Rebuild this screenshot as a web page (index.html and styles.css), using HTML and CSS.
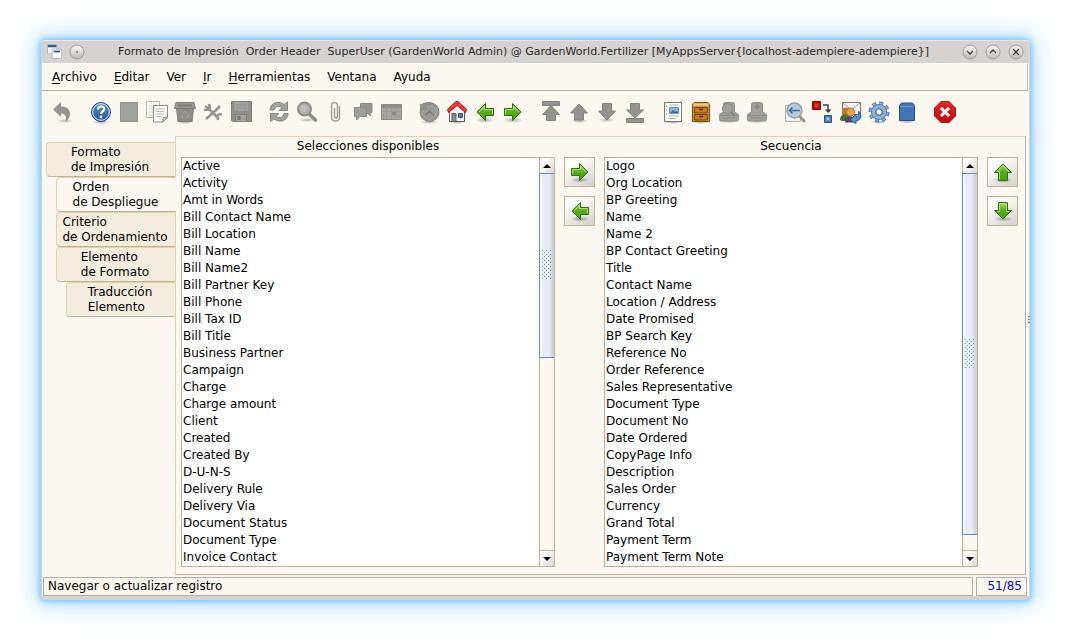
FILE: index.html
```html
<!DOCTYPE html>
<html lang="es">
<head>
<meta charset="utf-8">
<title>Formato de Impresión</title>
<link rel="stylesheet" href="styles.css">
</head>
<body>
<svg class="defs" aria-hidden="true">
  <defs>
    <linearGradient id="green" x1="0" y1="0" x2="0" y2="1"><stop offset="0" stop-color="#a5dc5c"/><stop offset=".5" stop-color="#59ae1c"/><stop offset="1" stop-color="#41a00c"/></linearGradient>
    <radialGradient id="shade"><stop offset="0" stop-color="#000" stop-opacity=".3"/><stop offset="1" stop-color="#000" stop-opacity="0"/></radialGradient>
    <linearGradient id="blue" x1="0" y1="0" x2="0" y2="1"><stop offset="0" stop-color="#5b8acb"/><stop offset="1" stop-color="#2a569b"/></linearGradient>
    <linearGradient id="red" x1="0" y1="0" x2="0" y2="1"><stop offset="0" stop-color="#e02a2a"/><stop offset="1" stop-color="#bd0b0b"/></linearGradient>
    <linearGradient id="knob" x1="0" y1="0" x2="0" y2="1"><stop offset="0" stop-color="#fbfaf9"/><stop offset="1" stop-color="#bdb9b6"/></linearGradient>
    <symbol id="arrow-right" viewBox="0 0 24 24"><ellipse cx="12" cy="20" rx="10" ry="3" fill="url(#shade)"/><path d="M3.500 8.500h8v-5l8.500 8.500-8.500 8.500v-5h-8z" fill="url(#green)" stroke="#2c7408"/><path d="M4.500 14v-4.500h8v-3l5.500 5.500" fill="none" stroke="#bce58a" stroke-opacity=".8"/></symbol>
    <symbol id="arrow-left" viewBox="0 0 24 24"><ellipse cx="12" cy="20" rx="10" ry="3" fill="url(#shade)"/><path d="M20.500 8.500h-8v-5l-8.500 8.500 8.500 8.500v-5h8z" fill="url(#green)" stroke="#2c7408"/><path d="M19.500 14v-4.500h-8v-3l-5.500 5.500" fill="none" stroke="#bce58a" stroke-opacity=".8"/></symbol>
    <symbol id="arrow-up" viewBox="0 0 24 24"><ellipse cx="12" cy="20" rx="10" ry="3" fill="url(#shade)"/><path d="M7.500 20.500v-8h-4l8.500-8.500 8.500 8.500h-4v8z" fill="url(#green)" stroke="#2c7408"/><path d="M8.500 19.500v-8h-2.500l6-6 6 6" fill="none" stroke="#bce58a" stroke-opacity=".8"/></symbol>
    <symbol id="arrow-down" viewBox="0 0 24 24"><ellipse cx="12" cy="20" rx="10" ry="3" fill="url(#shade)"/><path d="M7.500 3.500v8h-4l8.500 8.500 8.500-8.500h-4v-8z" fill="url(#green)" stroke="#2c7408"/><path d="M6 12.500h2.500v-8h7v8H18" fill="none" stroke="#bce58a" stroke-opacity=".8"/></symbol>
    <symbol id="printer" viewBox="0 0 24 24"><ellipse cx="12" cy="21" rx="10" ry="2.500" fill="url(#shade)"/><path d="M6.500 12V4.500q0-2 2-2h7q2 0 2 2V12l4 2.500v5q0 1.500-1.500 1.500H4q-1.500 0-1.500-1.500v-5z" fill="#a0a09e" stroke="#8d8d8c"/><path d="M3 15.500h18M6 18h12" stroke="#8b8b8a"/></symbol>
  </defs>
</svg>
<div class="window">
  <header class="titlebar">
    <svg class="app-icon" viewBox="0 0 16 16"><path d="M.5.500h10v10H.5z" fill="#f4f6f6" stroke="#b5bab8"/><path d="M1 1h9v2.500H1z" fill="#2c5b96"/><path d="M5.500 5.500h10v10h-10z" fill="#fff" stroke="#b5bab8"/><path d="M7 7h7v2H7z" fill="#2c5b96"/></svg>
    <button class="knob" aria-label="Menú de ventana"><svg viewBox="0 0 16 16"><circle cx="8" cy="8" r="7" fill="url(#knob)" stroke="#a09c99"/><circle cx="8" cy="8" r=".8" fill="#333"/></svg></button>
    <h1>Formato de Impresión&nbsp; Order Header&nbsp; SuperUser (GardenWorld Admin) @ GardenWorld.Fertilizer [MyAppsServer{localhost-adempiere-adempiere}]</h1>
    <div class="window-buttons">
      <button class="knob" aria-label="Minimizar"><svg viewBox="0 0 16 16"><circle cx="8" cy="8" r="7" fill="url(#knob)" stroke="#a09c99"/><path d="M5 7l3 3 3-3" fill="none" stroke="#444" stroke-width="1.300"/></svg></button>
      <button class="knob" aria-label="Maximizar"><svg viewBox="0 0 16 16"><circle cx="8" cy="8" r="7" fill="url(#knob)" stroke="#a09c99"/><path d="M5 9l3-3 3 3" fill="none" stroke="#444" stroke-width="1.300"/></svg></button>
      <button class="knob" aria-label="Cerrar"><svg viewBox="0 0 16 16"><circle cx="8" cy="8" r="7" fill="url(#knob)" stroke="#a09c99"/><path d="M5 5l6 6M11 5l-6 6" stroke="#444" stroke-width="1.300"/></svg></button>
    </div>
  </header>
  <div class="client">
    <nav class="menubar" aria-label="Menú principal">
      <button><u>A</u>rchivo</button>
      <button><u>E</u>ditar</button>
      <button>Ver</button>
      <button><u>I</u>r</button>
      <button><u>H</u>erramientas</button>
      <button>Ventana</button>
      <button>Ayuda</button>
    </nav>
    <div class="toolbar" role="toolbar" aria-label="Herramientas">
      <div class="group">
        <button aria-label="Deshacer" disabled><svg viewBox="0 0 24 24"><ellipse cx="14" cy="21" rx="8" ry="2" fill="url(#shade)"/><path d="M2 9.500L10 2v4.500c6 0 9 3 9 7.500 0 3.500-2 6-5 7.500 2-4 1-8-4-8V17z" fill="#949493"/></svg></button>
      </div>
      <div class="group">
        <button aria-label="Ayuda"><svg viewBox="0 0 24 24"><ellipse cx="12" cy="22" rx="9" ry="2" fill="url(#shade)"/><circle cx="12" cy="12" r="9.500" fill="url(#blue)" stroke="#24508f"/><circle cx="12" cy="12" r="8.300" fill="none" stroke="#dbe6f5"/><path d="M9 9.500q0-3 3.200-3 3 0 3 2.500 0 1.500-1.700 2.500-1.500.9-1.500 2.500" fill="none" stroke="#fff" stroke-width="2.200"/><circle cx="12" cy="17" r="1.400" fill="#fff"/></svg></button>
        <button aria-label="Nuevo" disabled><svg viewBox="0 0 24 24"><path d="M3.500 2.500h17v19h-17z" fill="#a1a19f" stroke="#939392"/></svg></button>
        <button aria-label="Copiar"><svg viewBox="0 0 24 24"><path d="M1.500 1.500h13v16h-13z" fill="#fafaf9" stroke="#b9b9b4"/><path d="M4 6h8M4 9h6M4 12h6M4 15h6" stroke="#cbcbc7"/><path d="M8.500 5.500h14v12l-4.500 4.500H8.500z" fill="#fcfcfa" stroke="#8b8c87"/><path d="M22.500 17.500h-4.500v4.500z" fill="#d0d0cc" stroke="#8b8c87"/><path d="M11 9h9M11 11.500h8M11 14h8M11 16.500h5" stroke="#bdbdb9"/></svg></button>
        <button aria-label="Eliminar" disabled><svg viewBox="0 0 24 24"><ellipse cx="12" cy="22" rx="10" ry="2" fill="url(#shade)"/><path d="M3.500 8h17l-1.500 13.500H5z" fill="#8d8d8c" stroke="#7c7c7b"/><path d="M3 2.500h18l1.500 6h-21z" fill="#979796" stroke="#7d7d7c"/><path d="M5 4.500h14l.5 2h-15z" fill="#7d7d7c"/><path d="M10 13l2-2 2 2M15 14l1 3h-3M11 17.500H8.500l1-3" fill="none" stroke="#a0a09e"/></svg></button>
        <button aria-label="Eliminar selección" disabled><svg viewBox="0 0 24 24"><path d="M4 6l4 3 5 5 5 5M19 6l-7 7-7 6M3 10l6-1M16 15l5-1M8 4l1 5M17 20l-1-5" fill="none" stroke="#959594" stroke-width="2.600"/></svg></button>
        <button aria-label="Guardar" disabled><svg viewBox="0 0 24 24"><path d="M2.500 1.500h20v20h-19l-1-1z" fill="#8f8f8e" stroke="#7f7f7e"/><path d="M5.500 2h14v9h-14z" fill="#a1a19f"/><path d="M7 5h11M7 8h11" stroke="#8f8f8e"/><path d="M6.500 14.500h11v7h-11z" fill="#a1a19f" stroke="#7f7f7e"/><path d="M8.500 16h3v4h-3z" fill="#777776"/></svg></button>
      </div>
      <div class="group">
        <button aria-label="Refrescar" disabled><svg viewBox="0 0 24 24"><path d="M3 10C3 3 11 0 17 4.500L20.500 2v8.500H12l3-3Q9 4 7 10zM21 13.500c0 7-8 10-14 5.500L3.500 21.500v-8H12l-3 3q6 3.500 8-3z" fill="#a0a09e" stroke="#888887"/></svg></button>
        <button aria-label="Buscar" disabled><svg viewBox="0 0 24 24"><ellipse cx="12" cy="20" rx="8" ry="2" fill="url(#shade)"/><path d="M14 14l6.500 6" stroke="#8b8b8a" stroke-width="3.600" stroke-linecap="round"/><circle cx="9.500" cy="9" r="6.500" fill="#b0b0ae" stroke="#8b8b8a" stroke-width="2"/><circle cx="9" cy="8.500" r="3" fill="#c1c1bf"/></svg></button>
        <button aria-label="Anexo" disabled><svg viewBox="0 0 24 24"><path d="M16.500 6v11q0 4-4 4t-4-4V6q0-3.500 3-3.500t3 3.500v10q0 2-1.500 2t-1.500-2V8" fill="none" stroke="#a1a1a0" stroke-width="1.500"/></svg></button>
        <button aria-label="Chat" disabled><svg viewBox="0 0 24 24"><path d="M9.500 3.500H21v9h-1.500v3.500l-4-3.500h-6z" fill="#969695" stroke="#8a8a89"/><path d="M3.500 7.500h12v9H9L5.500 20v-3.500h-2z" fill="#9e9e9d" stroke="#8a8a89"/></svg></button>
        <button aria-label="Vista de tabla" disabled><svg viewBox="0 0 24 24"><path d="M2.500 4.500h20v15h-20z" fill="#a5a5a3" stroke="#8d8d8c"/><path d="M3 5h19v3H3z" fill="#8d8d8c"/><path d="M3 11.500h19M3 15.500h19M7.500 8v11M12.500 8v11M17.500 8v11" stroke="#9a9a99"/><path d="M13 12h4v3h-4z" fill="#8a8a89"/></svg></button>
      </div>
      <div class="group">
        <button aria-label="Historial" disabled><svg viewBox="0 0 24 24"><ellipse cx="12" cy="22" rx="9" ry="2" fill="url(#shade)"/><circle cx="12.500" cy="12" r="9.500" fill="#979796" stroke="#858584"/><circle cx="12.500" cy="12.500" r="6.500" fill="none" stroke="#a4a4a2"/><path d="M8.500 15l4-3.500 4 3.500" fill="none" stroke="#777776" stroke-width="1.300"/><path d="M3 4l1 5.500 6-1.500-2-2q3-2 6-2-5-3-9 .5z" fill="#929291" stroke="#848483" stroke-width=".7"/></svg></button>
        <button aria-label="Inicio"><svg viewBox="0 0 24 24"><ellipse cx="12" cy="22" rx="10" ry="2" fill="url(#shade)"/><path d="M4.500 11L12 5l7.500 6v10.500h-15z" fill="#f5f5f4" stroke="#555753"/><path d="M3.500 12.500L2.500 9.500 11 1.500h2l8.500 8-1 3L12 5.500z" fill="#ed3b3b" stroke="#b81414"/><path d="M7 13.500h4v8H7z" fill="#888a84" stroke="#5c5e59"/><path d="M13.500 13.500h4v4h-4z" fill="#4b7db9" stroke="#355c8d"/></svg></button>
        <button aria-label="Anterior"><svg><use href="#arrow-left"/></svg></button>
        <button aria-label="Siguiente"><svg><use href="#arrow-right"/></svg></button>
      </div>
      <div class="group">
        <button aria-label="Primer registro" disabled><svg viewBox="0 0 24 24"><path d="M3.500 1.500h17v4h-17zM12 5.500l8.500 9h-4v6h-9v-6h-4z" fill="#929291" stroke="#838382"/></svg></button>
        <button aria-label="Registro anterior" disabled><svg viewBox="0 0 24 24"><ellipse cx="12" cy="21" rx="9" ry="2" fill="url(#shade)"/><path d="M12 4l8.500 9h-4v7h-9v-7h-4z" fill="#929291" stroke="#838382"/></svg></button>
        <button aria-label="Registro siguiente" disabled><svg viewBox="0 0 24 24"><ellipse cx="12" cy="20" rx="9" ry="2" fill="url(#shade)"/><path d="M12 20l-8.500-9h4V3.500h9V11h4z" fill="#929291" stroke="#838382"/></svg></button>
        <button aria-label="Último registro" disabled><svg viewBox="0 0 24 24"><path d="M12 18l-8.500-8h4V3.500h9V10h4zM3.500 18.500h17v4h-17z" fill="#929291" stroke="#838382"/></svg></button>
      </div>
      <div class="group">
        <button aria-label="Informe"><svg viewBox="0 0 24 24"><ellipse cx="12" cy="22" rx="10" ry="2" fill="url(#shade)"/><path d="M3.500 2.500h17v19h-17z" fill="#fdfdfc" stroke="#777974"/><path d="M8.500 7.500h9v6h-9z" fill="#8cb3df" stroke="#6a93c6"/><path d="M9 13l3-3 2 2 2-1 1 2z" fill="#40668d"/><path d="M8 5h10M8 16h10M8 18.500h7" stroke="#b3b3ae"/><path d="M5 6h1M5 10h1M5 14h1" stroke="#777"/></svg></button>
        <button aria-label="Archivo de documentos"><svg viewBox="0 0 24 24"><ellipse cx="12" cy="22" rx="10" ry="2" fill="url(#shade)"/><path d="M5 2.500h14l1.500 2v17h-17v-17z" fill="#d99b39" stroke="#7c4a05"/><path d="M4.500 4.500h15" stroke="#f2ca85" stroke-width="2"/><path d="M5.500 7.500h13v5.500h-13zM5.500 14.500h13V20h-13z" fill="#c57f16" stroke="#6e4206"/><path d="M10 9.500h4M10 16.500h4" stroke="#54330a" stroke-width="1.500"/></svg></button>
        <button aria-label="Vista previa" disabled><svg viewBox="0 0 24 24"><use href="#printer"/><circle cx="10.500" cy="8.500" r="5" fill="#a0a09e" stroke="#868685"/><path d="M14 12l4 4" stroke="#868685" stroke-width="2"/></svg></button>
        <button aria-label="Imprimir" disabled><svg viewBox="0 0 24 24"><use href="#printer"/><path d="M12 10V5M9.500 7.500L12 5l2.500 2.500" fill="none" stroke="#868685" stroke-width="1.500"/></svg></button>
      </div>
      <div class="group">
        <button aria-label="Visor de enlaces"><svg viewBox="0 0 24 24"><path d="M2.500 5.500h15v16h-15z" fill="#f3f3f1" stroke="#b2b2ae"/><path d="M15.500 15l5.500 6" stroke="#94948e" stroke-width="3" stroke-linecap="round"/><circle cx="11.500" cy="10.500" r="7.500" fill="#b4cae0" stroke="#9a9f9f" stroke-width="1.500"/><path d="M17 10.500H7M9.500 7.500l-3 3 3 3" fill="none" stroke="#3f6c9c" stroke-width="1.600"/></svg></button>
        <button aria-label="Flujo de trabajo"><svg viewBox="0 0 24 24"><path d="M1.500 1.500h8v8h-8z" fill="#c80808" stroke="#960808"/><path d="M3.500 3.500h4v4h-4z" fill="#e92f2f"/><path d="M12 5h5v5" fill="none" stroke="#454744" stroke-width="1.500"/><path d="M14 9.500h6.500L17.200 13z" fill="#333"/><path d="M13.500 15.500h7v7h-7z" fill="#4a7dbf" stroke="#25558f"/><path d="M15.500 17.500h3v3h-3z" fill="#a3c2e5"/></svg></button>
        <button aria-label="Solicitudes"><svg viewBox="0 0 24 24"><path d="M3.500 2.500h18v12h-18z" fill="#f7f7f5" stroke="#747671"/><path d="M4 3l8.500 7L21 3" fill="none" stroke="#9b9c97"/><circle cx="6.500" cy="11" r="3.500" fill="#c47b1c"/><path d="M1 20q0-6 6-6t4 7H3z" fill="#50702b"/><circle cx="11.500" cy="12" r="4" fill="#f0a047" stroke="#c27423"/><path d="M6 22.500q0-6 5.500-6t5.500 6z" fill="#513e78"/><path d="M11 20l6-6v3q3 0 2.500-6 6 8-2.500 10v2.500z" fill="#5d8fcc" stroke="#285891"/></svg></button>
        <button aria-label="Preferencias"><svg viewBox="0 0 24 24"><ellipse cx="12" cy="22" rx="9" ry="2" fill="url(#shade)"/><circle cx="12" cy="12" r="8.500" fill="none" stroke="#4671aa" stroke-width="4" stroke-dasharray="3.700 2.975"/><circle cx="12" cy="12" r="8.500" fill="none" stroke="#8baed8" stroke-width="2.500" stroke-dasharray="2.700 3.975" stroke-dashoffset="-.5"/><circle cx="12" cy="12" r="5.500" fill="none" stroke="#4671aa" stroke-width="5"/><circle cx="12" cy="12" r="5.500" fill="none" stroke="#8baed8" stroke-width="3.500"/><circle cx="12" cy="12" r="3" fill="#fbf8f1" stroke="#4671aa" stroke-width=".8"/></svg></button>
        <button aria-label="Producto"><svg viewBox="0 0 24 24"><ellipse cx="12" cy="21.500" rx="10" ry="2" fill="url(#shade)"/><path d="M4.500 5.500l2-2.500h11l2 2.500v15h-15z" fill="#4474b3" stroke="#27528e"/><path d="M5 6.500h14" stroke="#6d97cc"/></svg></button>
      </div>
      <div class="group">
        <button aria-label="Salir"><svg viewBox="0 0 24 24"><ellipse cx="12" cy="22" rx="9" ry="2" fill="url(#shade)"/><path d="M8 1.500h8l6.500 6.500v8L16 22.500H8L1.500 16V8z" fill="url(#red)" stroke="#b31414"/><path d="M8 8l8 8M16 8l-8 8" stroke="#fff" stroke-width="3"/></svg></button>
      </div>
    </div>
    <main class="workspace">
      <div class="tabs" role="tablist" aria-orientation="vertical">
        <button class="tab" role="tab" aria-selected="false"><span>Formato<br>de Impresión</span></button>
        <button class="tab tab-level-1" role="tab" aria-selected="true"><span>Orden<br>de Despliegue</span></button>
        <button class="tab tab-level-1" role="tab" aria-selected="false"><span>Criterio<br>de Ordenamiento</span></button>
        <button class="tab tab-level-1" role="tab" aria-selected="false"><span>Elemento<br>de Formato</span></button>
        <button class="tab tab-level-2" role="tab" aria-selected="false"><span>Traducción<br>Elemento</span></button>
      </div>
      <section class="panel" role="tabpanel">
        <h2 id="available">Selecciones disponibles</h2>
        <h2 id="sequence" class="sequence-title">Secuencia</h2>
        <div class="list">
          <ul role="listbox" aria-labelledby="available">
            <li role="option">Active</li><li role="option">Activity</li><li role="option">Amt in Words</li><li role="option">Bill Contact Name</li><li role="option">Bill Location</li><li role="option">Bill Name</li><li role="option">Bill Name2</li><li role="option">Bill Partner Key</li><li role="option">Bill Phone</li><li role="option">Bill Tax ID</li><li role="option">Bill Title</li><li role="option">Business Partner</li><li role="option">Campaign</li><li role="option">Charge</li><li role="option">Charge amount</li><li role="option">Client</li><li role="option">Created</li><li role="option">Created By</li><li role="option">D-U-N-S</li><li role="option">Delivery Rule</li><li role="option">Delivery Via</li><li role="option">Document Status</li><li role="option">Document Type</li><li role="option">Invoice Contact</li>
          </ul>
          <div class="scrollbar">
            <button class="scroll-button" aria-label="Subir"><svg viewBox="0 0 8 4"><path d="M4 0l4 4H0z"/></svg></button>
            <div class="track"><div class="thumb" style="height:49%"><i class="grip"></i></div></div>
            <button class="scroll-button" aria-label="Bajar"><svg viewBox="0 0 8 4"><path d="M0 0h8L4 4z"/></svg></button>
          </div>
        </div>
        <div class="movers">
          <button aria-label="Agregar"><svg><use href="#arrow-right"/></svg></button>
          <button aria-label="Quitar"><svg><use href="#arrow-left"/></svg></button>
        </div>
        <div class="list">
          <ul role="listbox" aria-labelledby="sequence">
            <li role="option">Logo</li><li role="option">Org Location</li><li role="option">BP Greeting</li><li role="option">Name</li><li role="option">Name 2</li><li role="option">BP Contact Greeting</li><li role="option">Title</li><li role="option">Contact Name</li><li role="option">Location / Address</li><li role="option">Date Promised</li><li role="option">BP Search Key</li><li role="option">Reference No</li><li role="option">Order Reference</li><li role="option">Sales Representative</li><li role="option">Document Type</li><li role="option">Document No</li><li role="option">Date Ordered</li><li role="option">CopyPage Info</li><li role="option">Description</li><li role="option">Sales Order</li><li role="option">Currency</li><li role="option">Grand Total</li><li role="option">Payment Term</li><li role="option">Payment Term Note</li>
          </ul>
          <div class="scrollbar">
            <button class="scroll-button" aria-label="Subir"><svg viewBox="0 0 8 4"><path d="M4 0l4 4H0z"/></svg></button>
            <div class="track"><div class="thumb" style="height:96%"><i class="grip"></i></div></div>
            <button class="scroll-button" aria-label="Bajar"><svg viewBox="0 0 8 4"><path d="M0 0h8L4 4z"/></svg></button>
          </div>
        </div>
        <div class="movers">
          <button aria-label="Mover arriba"><svg><use href="#arrow-up"/></svg></button>
          <button aria-label="Mover abajo"><svg><use href="#arrow-down"/></svg></button>
        </div>
      </section>
    </main>
    <footer class="statusbar">
      <output class="message">Navegar o actualizar registro</output>
      <output class="position">51/85</output>
    </footer>
  </div>
</div>
</body>
</html>
```
FILE: styles.css
```css
* { box-sizing: border-box; }

body {
  margin: 0;
  padding: 40px 40px 40px 41px;
  background: #fff;
  color: #000;
  font: 12px/17px "DejaVu Sans", sans-serif;
}

button {
  padding: 0;
  border: 0;
  background: none;
  color: inherit;
  font: inherit;
}

svg { display: block; }
.defs { position: absolute; width: 0; height: 0; }
h1, h2, ul { margin: 0; padding: 0; font-size: 12px; font-weight: normal; }

.window {
  position: relative;
  padding: 0 1px 4px;
  border-radius: 4px 4px 3px 3px;
  background: #d5d2cf;
  box-shadow: inset 0 1px #e9e7e5, 0 0 6px 1px #62c2fb, 0 0 24px 5px #b9dcff;
}

/* splitter grip on the right edge */
.window::after {
  content: "";
  position: absolute;
  top: 50%;
  right: 0;
  width: 2px;
  height: 8px;
  margin-top: -4px;
  background: repeating-linear-gradient(#888 0 1px, #ddd 1px 3px);
}

.titlebar {
  display: flex;
  align-items: center;
  height: 23px;
  padding: 0 5px;
}
.app-icon { width: 15px; height: 15px; }
.knob { width: 16px; height: 16px; flex: none; }
.app-icon + .knob { margin-left: 7px; }
.titlebar h1 {
  flex: 1;
  overflow: hidden;
  color: #25292c;
  font-size: 11px;
  text-align: center;
  white-space: nowrap;
}
.window-buttons { display: flex; gap: 7px; }

.client { border-right: 1px solid #fff; background: #fbf8f1; }

.menubar {
  display: flex;
  gap: 17px;
  padding: 5px 10px 4px;
  border-top: 1px solid #fff;
  border-right: 1px solid #c8bfae;
  border-bottom: 1px solid #bfb29a;
}
.menubar u { text-underline-offset: 2px; text-decoration-skip-ink: none; }

.toolbar { display: flex; gap: 10px; padding: 7px 7px 10px; }
.group { display: flex; }
.toolbar button {
  display: grid;
  place-items: center;
  width: 28px;
  height: 28px;
}
.toolbar svg { width: 24px; height: 24px; }

.workspace { display: flex; padding: 0 2px 2px 4px; }

.tabs {
  display: flex;
  flex-direction: column;
  width: 129px;
  padding-top: 6px;
}
.tab {
  position: relative;
  z-index: 1;
  display: flex;
  justify-content: center;
  height: 35px;
  padding: 2px 2px 0 0;
  border: 1px solid #e2d2a7;
  border-right: 0;
  border-bottom: 1px solid #bfb295;
  border-radius: 4px 0 0 4px;
  background: #f3eddd;
  line-height: 15px;
  text-align: left;
}
.tab[aria-selected="true"] { margin-right: -1px; background: #fbf8f1; }
.tab-level-1 { margin-left: 10px; }
.tab-level-2 { margin-left: 20px; }

.panel {
  flex: 1;
  display: grid;
  grid-template-columns: 1fr 31px 1fr 31px;
  column-gap: 9px;
  padding: 0 7px 7px 5px;
  border: 1px solid #e2d2a7;
  border-right-color: #bfb295;
  border-bottom-color: #bfb295;
}
.panel h2 { padding: 1px 0 2px; text-align: center; }
.panel .sequence-title { grid-column: 3; }

.list {
  grid-row: 2;
  display: flex;
  border: 1px solid #bfb295;
  background: #fff;
}
.list ul { flex: 1; padding-left: 1px; list-style: none; }

.scrollbar {
  display: flex;
  flex-direction: column;
  width: 15px;
  background: #fbf8f1;
}
.scroll-button {
  display: grid;
  place-items: center;
  height: 15px;
  border-left: 1px solid #bfb295;
  background: linear-gradient(120deg, #fff 30%, #d8d5cf);
}
.scroll-button svg { width: 8px; height: 4px; }
.track {
  flex: 1;
  border: 1px solid #bfb295;
  border-width: 0 0 1px 1px;
}
.thumb {
  display: grid;
  place-items: center;
  margin-left: -1px;
  border: 1px solid #628bc4;
  border-right: 0;
  background: linear-gradient(90deg, #fff 1px, #e8edf5 2px, #e8edf5 60%, #c7cdd6);
}

/* two interleaved rows of one-pixel dots */
.grip {
  width: 10px;
  height: 30px;
  background:
    conic-gradient(from 270deg at 1px 1px, #6e97cc 90deg, transparent 0) 0 0 / 4px 4px,
    conic-gradient(from 270deg at 1px 1px, #6e97cc 90deg, transparent 0) 2px 2px / 4px 4px;
}

.movers {
  grid-row: 2;
  display: flex;
  flex-direction: column;
  gap: 9px;
}
.movers button {
  display: grid;
  place-items: center;
  height: 30px;
  border: 1px solid #bfb295;
  background: linear-gradient(150deg, #fff 20%, #d5d2cc);
}
.movers svg { width: 24px; height: 24px; }

.statusbar { display: flex; gap: 3px; padding: 0 1px; }
.statusbar output { border: 1px solid #b1afab; }
.message { flex: 1; padding-left: 4px; }
.position { width: 51px; padding-right: 4px; color: #00f; text-align: right; }
```
